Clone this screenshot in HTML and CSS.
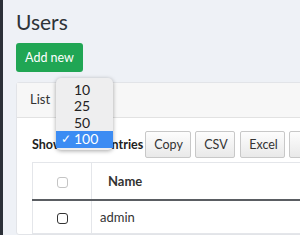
FILE: index.html
```html
<!DOCTYPE html>
<html lang="en">
<head>
  <meta charset="UTF-8">
  <title>Users</title>
  <link rel="stylesheet" href="styles.css">
</head>
<body>
  <div class="layout">
    <!-- sidebar edge -->
    <div class="sidebar"></div>

    <div class="content">
      <h1>Users</h1>
      <button type="button" class="btn-add">Add new</button>

      <div class="card">
        <div class="card-header">List</div>
        <div class="card-body">
          <div class="toolbar">
            <label class="length">
              Show
              <span class="length-select">
                <span class="select-box"></span>
                <!-- open dropdown -->
                <ul class="dropdown">
                  <li>10</li>
                  <li>25</li>
                  <li>50</li>
                  <li class="selected"><span class="check">✓</span>100</li>
                </ul>
              </span>
              entries
            </label>
            <div class="buttons">
              <button type="button" class="dt-btn">Copy</button>
              <button type="button" class="dt-btn">CSV</button>
              <button type="button" class="dt-btn">Excel</button>
              <button type="button" class="dt-btn dt-more"></button>
            </div>
          </div>

          <table class="users">
            <thead>
              <tr>
                <th class="col-check"><span class="box box-light"></span></th>
                <th>Name</th>
              </tr>
            </thead>
            <tbody>
              <tr>
                <td class="col-check"><span class="box"></span></td>
                <td>admin</td>
              </tr>
            </tbody>
          </table>
        </div>
      </div>
    </div>
  </div>
</body>
</html>
```

FILE: styles.css
```css
* { box-sizing: border-box; }
html, body {
  margin: 0;
  padding: 0;
  overflow: hidden;
}
body {
  font-family: "Lato", "Liberation Sans", sans-serif;
  color: #333;
  background: #eef1f6;
  width: 300px;
  height: 235px;
}
.layout {
  display: flex;
  height: 235px;
}
.sidebar {
  width: 3px;
  flex: none;
  background: #2b3038;
}
.content {
  flex: none;
  width: 520px;
  padding: 9px 0 0 13px;
}
h1 {
  margin: 0;
  font-weight: 400;
  font-size: 21px;
  line-height: 26px;
  color: #2e3338;
}
.btn-add {
  display: block;
  margin-top: 8px;
  height: 29px;
  width: 67px;
  padding: 0;
  border: none;
  border-radius: 3px;
  background: #20a654;
  color: #fff;
  font-family: "Lato", "Liberation Sans", sans-serif;
  font-size: 12.5px;
}
/* card */
.card {
  margin-top: 10px;
  background: #fff;
  border: 1px solid #e2e4e8;
  border-radius: 3px;
}
.card-header {
  height: 35px;
  padding: 0 0 0 13px;
  line-height: 33px;
  background: #f7f7f7;
  border-bottom: 1px solid #e2e2e2;
  font-size: 13px;
  color: #333;
}
.card-body {
  padding: 13px 15px 0 15px;
}
.toolbar {
  display: flex;
  align-items: center;
  height: 27px;
}
.length {
  display: flex;
  align-items: center;
  font-weight: 700;
  font-size: 12.5px;
  color: #222;
}
.length-select {
  position: relative;
  display: inline-block;
  width: 40px;
  height: 18px;
  margin: 0 1px;
}
.select-box {
  display: block;
  width: 100%;
  height: 100%;
}
.dropdown {
  position: absolute;
  left: -8px;
  top: -58px;
  width: 57px;
  margin: 0;
  padding: 4px 0 2px 0;
  list-style: none;
  background: #eeeeef;
  border-radius: 5px;
  box-shadow: 0 1px 4px rgba(0, 0, 0, 0.35);
  font-weight: 400;
  font-size: 14px;
  color: #222;
  z-index: 2;
}
.dropdown li {
  height: 16.5px;
  line-height: 16px;
  padding-left: 18px;
}
.dropdown li.selected {
  position: relative;
  background: #3c8cf3;
  color: #fff;
}
.check {
  position: absolute;
  left: 5px;
  font-size: 12px;
}
.buttons {
  display: flex;
  gap: 4px;
  margin-left: 2px;
}
.dt-btn {
  height: 27px;
  padding: 0 8px;
  border: 1px solid #c8c8c8;
  border-radius: 2px;
  background: linear-gradient(to bottom, #fdfdfd, #e9e9e9);
  font-family: "Lato", "Liberation Sans", sans-serif;
  font-size: 12.5px;
  color: #333;
}
.dt-btn:first-child { width: 46px; }
.dt-btn:nth-child(2) { width: 40px; }
.dt-btn:nth-child(3) { width: 45px; margin-left: 1px; }
.dt-more { width: 40px; }
/* table */
.users {
  margin-top: 4px;
  border-collapse: collapse;
  width: 440px;
  font-size: 13px;
  color: #333;
}
.users th,
.users td {
  border: 1px solid #e4e6ea;
  text-align: left;
}
.users th {
  height: 37px;
  padding: 0 16px;
  font-weight: 700;
  border-bottom: 2px solid #5a5d62;
}
.users td {
  height: 34px;
  padding: 0 8px;
}
.users .col-check {
  width: 59px;
  padding: 0;
  text-align: center;
}
.box {
  display: inline-block;
  width: 11px;
  height: 11px;
  border: 1.5px solid #333;
  border-radius: 3px;
  vertical-align: middle;
}
.box-light {
  border: 1px solid #c4c4c4;
}
```
